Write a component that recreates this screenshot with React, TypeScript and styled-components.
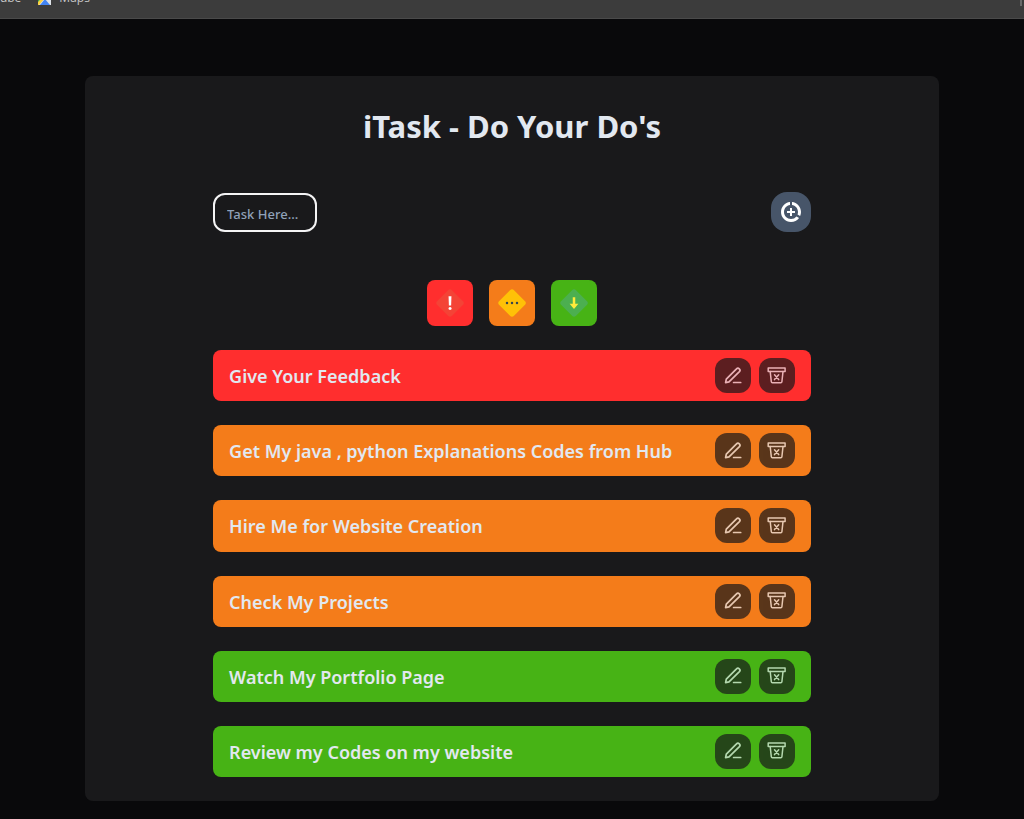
import React, { useState } from "react";
import styled, { createGlobalStyle } from "styled-components";
import { MdDataSaverOn } from "react-icons/md";
import { FcHighPriority, FcMediumPriority, FcLowPriority } from "react-icons/fc";

type Priority = "high" | "medium" | "low";

const priorityColor: Record<Priority, string> = {
  high: "#ff2e2e",
  medium: "#f47c1a",
  low: "#47b315",
};

const priorities = [
  { id: "high" as Priority, label: "High priority", Icon: FcHighPriority },
  { id: "medium" as Priority, label: "Medium priority", Icon: FcMediumPriority },
  { id: "low" as Priority, label: "Low priority", Icon: FcLowPriority },
];

const tasks: { text: string; priority: Priority }[] = [
  { text: "Give Your Feedback", priority: "high" },
  { text: "Get My java , python Explanations Codes from Hub", priority: "medium" },
  { text: "Hire Me for Website Creation", priority: "medium" },
  { text: "Check My Projects", priority: "medium" },
  { text: "Watch My Portfolio Page", priority: "low" },
  { text: "Review my Codes on my website", priority: "low" },
];

const GlobalStyle = createGlobalStyle`
  *, *::before, *::after { box-sizing: border-box; }
  body {
    margin: 0;
    background: #09090b;
    color: #e2e8f0;
    font-family: "Segoe UI", "Noto Sans", "Open Sans", sans-serif;
  }
  button, input { font: inherit; color: inherit; }
`;

const Page = styled.div`
  min-height: 100vh;
  display: flex;
  flex-direction: column;
`;

const BookmarkBar = styled.nav`
  height: 19px;
  flex: none;
  display: flex;
  align-items: flex-start;
  justify-content: space-between;
  overflow: hidden;
  background: #3c3c3c;
  border-bottom: 1px solid #4a4a4a;
`;

const Bookmarks = styled.div`
  display: flex;
  gap: 17px;
  margin: -10px 0 0 -28px;
`;

const Bookmark = styled.a`
  display: flex;
  align-items: center;
  gap: 8px;
  color: #c7c7c7;
  font-family: "Segoe UI", "Open Sans", sans-serif;
  font-size: 12px;
  line-height: 16px;
  text-decoration: none;
`;

const BarDivider = styled.span`
  width: 2px;
  height: 6px;
  margin-right: 2px;
  background: #6a6a6a;
`;

const Main = styled.main`
  flex: 1;
  display: flex;
  justify-content: center;
  padding: 57px 0 18px;
`;

const Panel = styled.section`
  width: 83.4%;
  display: flex;
  flex-direction: column;
  align-items: center;
  padding: 24px 0;
  border-radius: 8px;
  background: #19191b;
`;

const Title = styled.h1`
  margin: 0;
  font-size: 31px;
  line-height: 52px;
  font-weight: 700;
  text-align: center;
`;

const AddForm = styled.form`
  width: 70%;
  display: flex;
  align-items: center;
  justify-content: space-between;
  margin-top: 40px;
`;

const TaskInput = styled.input`
  width: 104px;
  height: 39px;
  padding: 4px 12px 0;
  border: 2px solid #f4f4f5;
  border-radius: 12px;
  outline: none;
  background: transparent;
  font-size: 13px;
  font-weight: 500;
  &::placeholder { color: #90a1b9; opacity: 1; }
`;

const AddButton = styled.button`
  width: 40px;
  height: 40px;
  display: grid;
  place-items: center;
  padding: 0;
  border: 0;
  border-radius: 16px;
  background: #475569;
  color: #fff;
  cursor: pointer;
`;

const PriorityPicker = styled.div`
  display: flex;
  gap: 16px;
  margin: 48px 0 24px;
`;

const PriorityButton = styled.button<{ $priority: Priority }>`
  display: grid;
  padding: 8px;
  border: 0;
  border-radius: 8px;
  background: ${(p) => priorityColor[p.$priority]};
  cursor: pointer;
`;

const TaskList = styled.ul`
  flex: 1;
  width: 70%;
  display: grid;
  grid-auto-rows: 1fr;
  gap: 24px;
  margin: 0;
  padding: 0;
  list-style: none;
`;

const TaskRow = styled.li<{ $priority: Priority }>`
  display: flex;
  align-items: center;
  justify-content: space-between;
  padding: 8px 16px;
  border-radius: 8px;
  background: ${(p) => priorityColor[p.$priority]};
`;

const TaskText = styled.span`
  padding-top: 1px;
  font-size: 18px;
  line-height: 24px;
  font-weight: 600;
`;

const Actions = styled.div`
  display: flex;
  gap: 8px;
`;

const ActionButton = styled.button`
  display: grid;
  place-items: center;
  width: 36px;
  height: 35px;
  padding: 0;
  border: 0;
  border-radius: 12px;
  background: #18181b;
  opacity: 0.7;
  cursor: pointer;
`;

const MapsIcon = () => (
  <svg width="13" height="13" viewBox="0 0 13 13" aria-hidden="true">
    <rect width="13" height="13" rx="2" fill="#34a853" />
    <path d="M0 13 11 0h2v13z" fill="#dfe3e8" />
    <path d="M0 10 9 0h3L1 13H0z" fill="#fbd03b" />
    <path d="m2 13 5-6 5 6z" fill="#4285f4" />
  </svg>
);

const PenIcon = () => (
  <svg width="20" height="20" viewBox="0 0 20 20" fill="none" stroke="currentColor" strokeWidth="1.7" strokeLinecap="round" strokeLinejoin="round" aria-hidden="true">
    <path d="M2.6 16.6 3.3 13.2 13.5 2.9a1.9 1.9 0 0 1 2.9 2.7L6 15.8z" />
    <path d="M10.6 16.5h7.1" />
  </svg>
);

const BinIcon = () => (
  <svg width="20" height="20" viewBox="0 0 20 20" fill="none" stroke="currentColor" strokeWidth="1.5" strokeLinecap="round" strokeLinejoin="round" aria-hidden="true">
    <path d="M1.2 2.1h16.9v3.4H1.2z" />
    <path d="m3.2 5.6 1.1 10.1q.1 1 1.1 1h8.4q1 0 1.1-1L16 5.6" />
    <path d="m7.5 8.8 4.2 4.8M11.7 8.8l-4.2 4.8" />
  </svg>
);

export default function App() {
  const [draft, setDraft] = useState("");
  return (
    <>
      <GlobalStyle />
      <Page>
        <BookmarkBar aria-label="Bookmarks">
          <Bookmarks>
            <Bookmark href="#youtube">YouTube</Bookmark>
            <Bookmark href="#maps">
              <MapsIcon />
              Maps
            </Bookmark>
          </Bookmarks>
          <BarDivider />
        </BookmarkBar>
        <Main>
          <Panel>
            <Title>iTask - Do Your Do's</Title>
            <AddForm onSubmit={(e) => e.preventDefault()}>
              <TaskInput
                aria-label="New task"
                placeholder="Task Here..."
                value={draft}
                onChange={(e) => setDraft(e.target.value)}
              />
              <AddButton type="submit" aria-label="Add task">
                <MdDataSaverOn size={24} />
              </AddButton>
            </AddForm>
            <PriorityPicker>
              {priorities.map(({ id, label, Icon }) => (
                <PriorityButton key={id} type="button" $priority={id} aria-label={label}>
                  <Icon size={30} />
                </PriorityButton>
              ))}
            </PriorityPicker>
            <TaskList>
              {tasks.map((task) => (
                <TaskRow key={task.text} $priority={task.priority}>
                  <TaskText>{task.text}</TaskText>
                  <Actions>
                    <ActionButton type="button" aria-label={`Edit ${task.text}`}>
                      <PenIcon />
                    </ActionButton>
                    <ActionButton type="button" aria-label={`Delete ${task.text}`}>
                      <BinIcon />
                    </ActionButton>
                  </Actions>
                </TaskRow>
              ))}
            </TaskList>
          </Panel>
        </Main>
      </Page>
    </>
  );
}
